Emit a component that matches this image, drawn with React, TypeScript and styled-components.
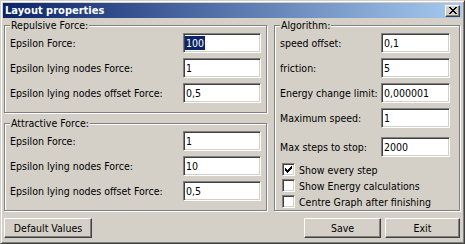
import React from 'react';
import styled, { createGlobalStyle } from 'styled-components';

const GlobalStyle = createGlobalStyle`
  html, body {
    margin: 0;
    padding: 0;
    background: #d4d0c8;
  }
  body {
    font-family: "DejaVu Sans Condensed", "Liberation Sans", sans-serif;
    font-size: 10.5px;
    color: #000;
  }
`;

const Window = styled.div`
  box-sizing: border-box;
  width: 465px;
  height: 244px;
  display: flex;
  flex-direction: column;
  padding: 2px;
  background: #d4d0c8;
  border: 1px solid;
  border-color: #d4d0c8 #404040 #404040 #d4d0c8;
  box-shadow: inset 1px 1px 0 #fff, inset -1px -1px 0 #808080;
  overflow: hidden;
`;

const TitleBar = styled.div`
  height: 15px;
  flex: none;
  display: flex;
  align-items: center;
  justify-content: space-between;
  padding: 0 2px;
  background: linear-gradient(to right, #0a246a, #a6caf0);
`;

const Title = styled.span`
  color: #fff;
  font-weight: bold;
  font-size: 11px;
  line-height: 15px;
  white-space: nowrap;
`;

const Raised = styled.div`
  box-sizing: border-box;
  display: flex;
  align-items: center;
  justify-content: center;
  background: #d4d0c8;
  border: 1px solid;
  border-color: #fff #404040 #404040 #fff;
  box-shadow: inset -1px -1px 0 #808080;
`;

const CloseButton = styled(Raised)`
  width: 15px;
  height: 12px;
`;

const Main = styled.div`
  display: flex;
  gap: 7px;
  height: 186px;
  flex: none;
  margin-top: 7px;
  padding: 0 2px 0 1px;
`;

const Column = styled.div`
  width: 263px;
  display: flex;
  flex-direction: column;
  gap: 10px;
`;

const Group = styled.div<{ $width: number }>`
  position: relative;
  box-sizing: border-box;
  width: ${(p) => p.$width}px;
  flex: 1;
  border: 1px solid #808080;
  box-shadow: inset 1px 1px 0 #fff, 1px 1px 0 #fff;
  padding: 7px 5px 0 5px;
  display: flex;
  flex-direction: column;
`;

const Legend = styled.span`
  position: absolute;
  top: -7px;
  left: 5px;
  padding: 0 1px;
  line-height: 13px;
  background: #d4d0c8;
  white-space: nowrap;
`;

const Row = styled.div<{ $cols: string; $gapTop: number }>`
  display: grid;
  grid-template-columns: ${(p) => p.$cols};
  align-items: center;
  margin-top: ${(p) => p.$gapTop}px;
`;

const Label = styled.span`
  line-height: 14px;
  white-space: nowrap;
`;

const Field = styled.div`
  box-sizing: border-box;
  height: 20px;
  display: flex;
  align-items: center;
  padding-left: 1px;
  background: #fff;
  border: 1px solid;
  border-color: #808080 #fff #fff #808080;
  box-shadow: inset 1px 1px 0 #404040, inset -1px -1px 0 #d4d0c8;
`;

const Value = styled.span<{ $selected?: boolean }>`
  padding: 0 1px;
  line-height: 14px;
  white-space: nowrap;
  background: ${(p) => (p.$selected ? '#0a246a' : 'transparent')};
  color: ${(p) => (p.$selected ? '#fff' : '#000')};
`;

const CheckList = styled.div`
  display: flex;
  flex-direction: column;
  gap: 3px;
  margin-top: 6px;
  padding-left: 2px;
`;

const CheckRow = styled.div`
  display: flex;
  align-items: center;
  gap: 4px;
  height: 13px;
`;

const Box = styled.div`
  box-sizing: border-box;
  width: 13px;
  height: 13px;
  padding: 1px;
  background: #fff;
  border: 1px solid;
  border-color: #808080 #fff #fff #808080;
  box-shadow: inset 1px 1px 0 #404040, inset -1px -1px 0 #d4d0c8;
  display: flex;
  align-items: center;
  justify-content: center;
`;

const Footer = styled.div`
  display: flex;
  flex: none;
  gap: 4px;
  margin-top: 7px;
  padding: 0 2px 0 1px;
`;

const Button = styled(Raised)<{ $width: number }>`
  width: ${(p) => p.$width}px;
  height: 20px;
  line-height: 14px;
  white-space: nowrap;
`;

const Spacer = styled.div`
  flex: 1;
`;

const LEFT_COLS = '173px 78px';
const RIGHT_COLS = '101px 69px';

type Entry = { label: string; value: string; selected?: boolean; gap?: number };

const repulsive: Entry[] = [
  { label: 'Epsilon Force:', value: '100', selected: true },
  { label: 'Epsilon lying nodes Force:', value: '1' },
  { label: 'Epsilon lying nodes offset Force:', value: '0,5' },
];

const attractive: Entry[] = [
  { label: 'Epsilon Force:', value: '1' },
  { label: 'Epsilon lying nodes Force:', value: '10' },
  { label: 'Epsilon lying nodes offset Force:', value: '0,5' },
];

const algorithm: Entry[] = [
  { label: 'speed offset:', value: '0,1' },
  { label: 'friction:', value: '5' },
  { label: 'Energy change limit:', value: '0,000001' },
  { label: 'Maximum speed:', value: '1' },
  { label: 'Max steps to stop:', value: '2000', gap: 9 },
];

const checks = [
  { label: 'Show every step', checked: true },
  { label: 'Show Energy calculations', checked: false },
  { label: 'Centre Graph after finishing', checked: false },
];

const CheckMark = () => (
  <svg width="7" height="7" viewBox="0 0 7 7" shapeRendering="crispEdges">
    <path
      d="M0 2h1v3H0z M1 3h1v3H1z M2 4h1v3H2z M3 3h1v3H3z M4 2h1v3H4z M5 1h1v3H5z M6 0h1v3H6z"
      fill="#000"
    />
  </svg>
);

const CloseGlyph = () => (
  <svg width="8" height="7" viewBox="0 0 8 7" shapeRendering="crispEdges">
    <path
      d="M0 0h2v1h-2z M6 0h2v1h-2z M1 1h2v1h-2z M5 1h2v1h-2z M2 2h4v1h-4z M3 3h2v1h-2z M2 4h4v1h-4z M1 5h2v1h-2z M5 5h2v1h-2z M0 6h2v1h-2z M6 6h2v1h-2z"
      fill="#000"
    />
  </svg>
);

const Fields = ({ items, cols }: { items: Entry[]; cols: string }) => (
  <>
    {items.map((e, i) => (
      <Row key={i} $cols={cols} $gapTop={i === 0 ? 0 : e.gap ?? 5}>
        <Label>{e.label}</Label>
        <Field>
          <Value $selected={e.selected}>{e.value}</Value>
        </Field>
      </Row>
    ))}
  </>
);

const App = () => {
  return (
    <>
      <GlobalStyle />
      <Window>
        <TitleBar>
          <Title>Layout properties</Title>
          <CloseButton>
            <CloseGlyph />
          </CloseButton>
        </TitleBar>
        <Main>
          <Column>
            <Group $width={263}>
              <Legend>Repulsive Force:</Legend>
              <Fields items={repulsive} cols={LEFT_COLS} />
            </Group>
            <Group $width={263}>
              <Legend>Attractive Force:</Legend>
              <Fields items={attractive} cols={LEFT_COLS} />
            </Group>
          </Column>
          <Group $width={186}>
            <Legend>Algorithm:</Legend>
            <Fields items={algorithm} cols={RIGHT_COLS} />
            <CheckList>
              {checks.map((c, i) => (
                <CheckRow key={i}>
                  <Box>{c.checked && <CheckMark />}</Box>
                  <Label>{c.label}</Label>
                </CheckRow>
              ))}
            </CheckList>
          </Group>
        </Main>
        <Footer>
          <Button $width={88}>Default Values</Button>
          <Spacer />
          <Button $width={77}>Save</Button>
          <Button $width={75}>Exit</Button>
        </Footer>
      </Window>
    </>
  );
};

export default App;
